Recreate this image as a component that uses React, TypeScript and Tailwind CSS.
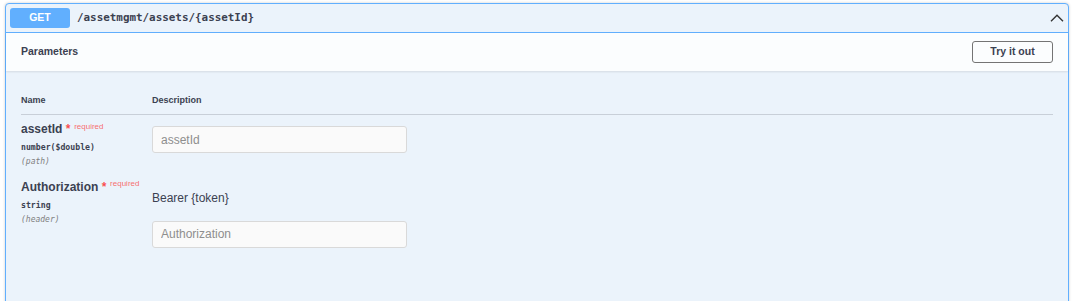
import React from "react";

const sans = { fontFamily: '"Liberation Sans", Arial, sans-serif' };
const mono = { fontFamily: '"DejaVu Sans Mono", monospace' };

interface Param {
	name: string;
	type: string;
	location: string;
	hint?: string;
}

const params: Param[] = [
	{ name: "assetId", type: "number($double)", location: "(path)" },
	{ name: "Authorization", type: "string", location: "(header)", hint: "Bearer {token}" },
];

const ParamRow: React.FC<{ param: Param }> = ({ param }) => (
	<div className="grid grid-cols-[131px_1fr] pt-[7px] pb-[4.5px]">
		<div>
			<div className="text-[12px] leading-[14px] font-bold text-[#3b4151] whitespace-nowrap">
				{param.name}
				<span className="text-[rgba(255,0,0,0.7)]">&nbsp;*</span>
				<span className="relative top-[-4.5px] pl-[3.75px] text-[8px] font-normal text-[rgba(255,0,0,0.6)]">
					required
				</span>
			</div>
			<div style={mono} className="py-[3px] text-[8.2px] leading-[12px] font-bold text-[#3b4151]">
				{param.type}
			</div>
			<div style={mono} className="text-[8px] leading-[12px] italic text-[#808080]">
				{param.location}
			</div>
		</div>
		<div>
			{param.hint && (
				<div className="mt-[11px] text-[12px] leading-[14px] text-[#3b4151]">{param.hint}</div>
			)}
			<input
				readOnly
				placeholder={param.name}
				style={sans}
				className={`${param.hint ? "mt-[16px]" : "mt-[4px]"} block w-[255px] h-[27px] pl-[8px] rounded-[3px] border border-[#d9d9d9] bg-[#fafafa] text-[12px] text-[#3b4151] placeholder:text-[#8e8e8e] outline-none`}
			/>
		</div>
	</div>
);

export default function App() {
	return (
		<div style={sans} className="h-[301px] overflow-hidden bg-white pt-[3px] pl-[5px]">
			<div className="w-[1064px] h-[320px] rounded-[4px] border border-[#61affe] bg-[#ebf3fb] shadow-[0_0_3px_rgba(0,0,0,0.19)]">
				{/* Summary */}
				<div className="flex items-center h-[29px] px-[4px] border-b border-[#61affe]">
					<span className="flex items-center justify-center w-[60px] h-[20px] rounded-[3px] bg-[#61affe] text-white text-[10.5px] font-bold">
						GET
					</span>
					<span style={mono} className="ml-[7px] text-[10.9px] font-bold text-[#3b4151]">
						/assetmgmt/assets/{"{assetId}"}
					</span>
					<div className="flex-1" />
					<svg width="14" height="8" viewBox="0 0 14 8">
						<polyline points="1,7.2 7,1.2 13,7.2" fill="none" stroke="#333" strokeWidth="1.4" />
					</svg>
				</div>

				{/* Parameters header */}
				<div className="flex items-center justify-between h-[38px] px-[15px] bg-white/80 shadow-[0_1px_2px_rgba(0,0,0,0.1)]">
					<h4 className="text-[10.5px] font-bold text-[#3b4151]">Parameters</h4>
					<button className="w-[81px] h-[22px] rounded-[3px] border border-[#747474] bg-transparent text-[10.5px] font-bold text-[#3b4151]">
						Try it out
					</button>
				</div>

				{/* Table */}
				<div className="px-[15px] pt-[15px]">
					<div className="grid grid-cols-[131px_1fr] pt-[9px] pb-[8px] border-b border-[rgba(59,65,81,0.2)] text-[9px] leading-[11px] font-bold text-[#3b4151]">
						<div>Name</div>
						<div>Description</div>
					</div>
					{params.map((p) => (
						<ParamRow key={p.name} param={p} />
					))}
				</div>
			</div>
		</div>
	);
}
